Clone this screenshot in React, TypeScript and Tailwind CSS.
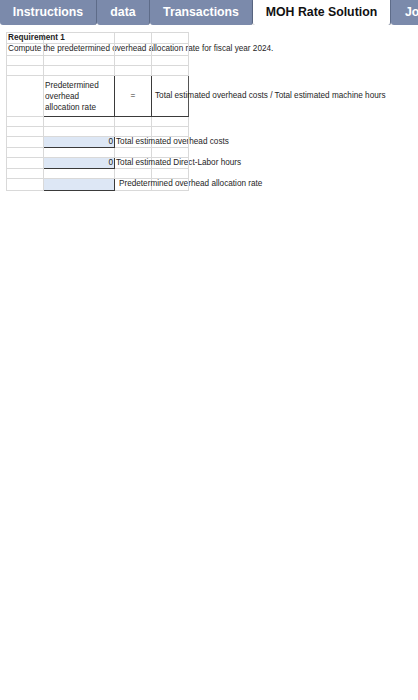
import React from 'react'

const font = { fontFamily: '"Liberation Sans", Arial, sans-serif' }

interface Tab {
  label: string
  width: string
  active?: boolean
}

const tabs: Tab[] = [
  { label: 'Instructions', width: 'w-[97px]' },
  { label: 'data', width: 'w-[53px]' },
  { label: 'Transactions', width: 'w-[103px]' },
  { label: 'MOH Rate Solution', width: 'w-[138px]', active: true },
  { label: 'Journal Entries', width: 'w-[110px]' },
]

const LIGHT = 'border-[#d9d9d9]'

// one grid row: A B C D with light lines
function Row({ h, children }: { h: string; children?: React.ReactNode }) {
  return <div className={`flex ${h}`}>{children}</div>
}

function Cell({ w, className = '', children }: { w: string; className?: string; children?: React.ReactNode }) {
  return (
    <div className={`${w} shrink-0 h-full border-r border-b ${LIGHT} flex items-center whitespace-nowrap ${className}`}>
      {children}
    </div>
  )
}

function Blank({ h }: { h: string }) {
  return (
    <Row h={h}>
      <Cell w="w-[37px]" />
      <Cell w="w-[71px]" />
      <Cell w="w-[37px]" />
      <Cell w="w-[37px]" />
    </Row>
  )
}

function InputRow({ h, value, label, indent }: { h: string; value: string; label: string; indent?: boolean }) {
  return (
    <Row h={h}>
      <Cell w="w-[37px]" />
      <Cell w="w-[71px]" className="bg-[#dde7f5] !border-b-[#3a3a3a] !border-r-[#3a3a3a] justify-end pr-[1px]">
        {value}
      </Cell>
      <Cell w="w-[37px]" className={indent ? 'pl-[4px]' : 'pl-[1px]'}>
        {label}
      </Cell>
      <Cell w="w-[37px]" />
    </Row>
  )
}

export default function App() {
  return (
    <div className="min-h-[700px] bg-white" style={font}>
      {/* Sheet tabs */}
      <div className="flex h-[25px] overflow-hidden bg-white">
        {tabs.map((t) => (
          <div
            key={t.label}
            className={`${t.width} shrink-0 h-full flex items-center text-[12.3px] font-bold rounded-b-[3px] border-r border-[#5e6c89] ${
              t.active ? 'bg-white text-[#111] shadow-[0_1px_2px_rgba(0,0,0,0.25)]' : 'bg-[#7b8aab] text-white'
            } ${t.label === 'Journal Entries' ? 'justify-start pl-[14px]' : 'justify-center'}`}
          >
            {t.label}
          </div>
        ))}
      </div>

      {/* Worksheet */}
      <div className={`ml-[6px] mt-[7px] w-[183px] border-l border-t ${LIGHT} text-[8.2px] text-[#1e1e1e] leading-none`}>
        <Row h="h-[11px]">
          <Cell w="w-[37px]" className="font-bold pl-[1px]">Requirement 1</Cell>
          <Cell w="w-[71px]" />
          <Cell w="w-[37px]" />
          <Cell w="w-[37px]" />
        </Row>
        <Row h="h-[12px]">
          <Cell w="w-[37px]" className="pl-[1px]">
            Compute the predetermined overhead allocation rate for fiscal year 2024.
          </Cell>
          <Cell w="w-[71px]" />
          <Cell w="w-[37px]" />
          <Cell w="w-[37px]" />
        </Row>
        <Blank h="h-[10px]" />
        <Blank h="h-[10px]" />
        <Row h="h-[41px]">
          <Cell w="w-[37px]" />
          <Cell w="w-[71px]" className="!border-b-[#3a3a3a] !border-r-[#3a3a3a] pl-[1px] whitespace-normal leading-[11px]">
            <span>
              Predetermined
              <br />
              overhead
              <br />
              allocation rate
            </span>
          </Cell>
          <Cell w="w-[37px]" className="!border-b-[#3a3a3a] !border-r-[#3a3a3a] justify-center">
            =
          </Cell>
          <Cell w="w-[37px]" className="!border-b-[#3a3a3a] !border-r-[#555] pl-[3px]">
            Total estimated overhead costs / Total estimated machine hours
          </Cell>
        </Row>
        <Blank h="h-[10px]" />
        <Blank h="h-[10px]" />
        <InputRow h="h-[11px]" value="0" label="Total estimated overhead costs" />
        <Blank h="h-[10px]" />
        <InputRow h="h-[11px]" value="0" label="Total estimated Direct-Labor hours" />
        <Blank h="h-[10px]" />
        <InputRow h="h-[12px]" value="" label="Predetermined overhead allocation rate" indent />
      </div>
    </div>
  )
}
